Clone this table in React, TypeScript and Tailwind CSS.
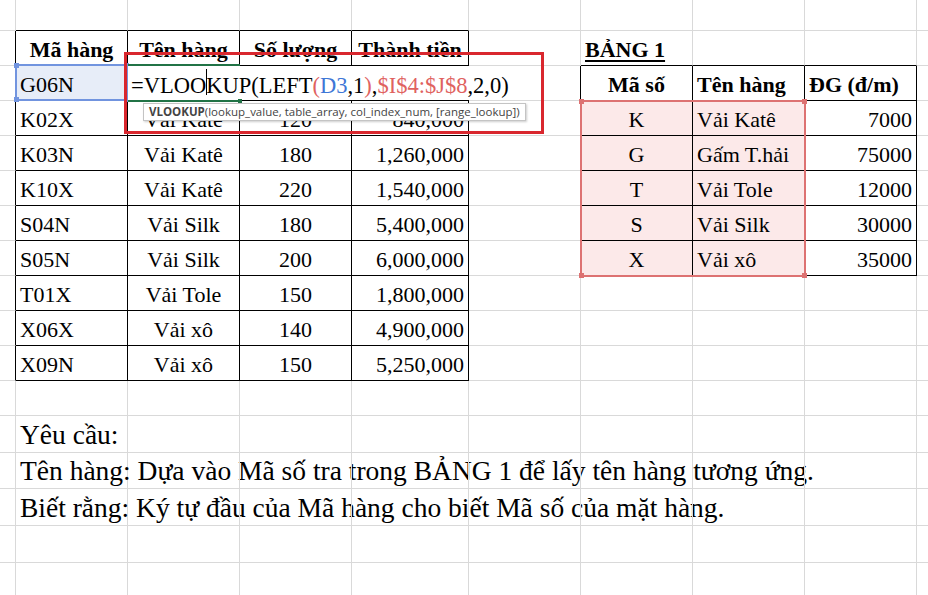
import React from "react";

type Cell = { t: string; a?: "l" | "c" | "r"; b?: boolean; u?: boolean; big?: boolean };

const ROW_COUNT = 17;
const COL_COUNT = 10;

const align = { l: "justify-start", c: "justify-center", r: "justify-end" };

const goods = [
  ["K02X", "Vải Katê", "120", "840,000"],
  ["K03N", "Vải Katê", "180", "1,260,000"],
  ["K10X", "Vải Katê", "220", "1,540,000"],
  ["S04N", "Vải Silk", "180", "5,400,000"],
  ["S05N", "Vải Silk", "200", "6,000,000"],
  ["T01X", "Vải Tole", "150", "1,800,000"],
  ["X06X", "Vải xô", "140", "4,900,000"],
  ["X09N", "Vải xô", "150", "5,250,000"],
];

const prices = [
  ["K", "Vải Katê", "7000"],
  ["G", "Gấm T.hải", "75000"],
  ["T", "Vải Tole", "12000"],
  ["S", "Vải Silk", "30000"],
  ["X", "Vải xô", "35000"],
];

const cells: Record<string, Cell> = {
  "1-1": { t: "Mã hàng", a: "c", b: true },
  "1-2": { t: "Tên hàng", a: "c", b: true },
  "1-3": { t: "Số lượng", a: "c", b: true },
  "1-4": { t: "Thành tiền", a: "c", b: true },
  "2-1": { t: "G06N", a: "l" },
  "1-6": { t: "BẢNG 1", a: "l", b: true, u: true },
  "2-6": { t: "Mã số", a: "c", b: true },
  "2-7": { t: "Tên hàng", a: "l", b: true },
  "2-8": { t: "ĐG (đ/m)", a: "l", b: true },
  "12-1": { t: "Yêu cầu:", a: "l", big: true },
  "13-1": { t: "Tên hàng: Dựa vào Mã số tra trong BẢNG 1 để lấy tên hàng tương ứng.", a: "l", big: true },
  "14-1": { t: "Biết rằng: Ký tự đầu của Mã hàng cho biết Mã số của mặt hàng.", a: "l", big: true },
};

goods.forEach((g, i) => {
  const r = i + 3;
  cells[`${r}-1`] = { t: g[0], a: "l" };
  cells[`${r}-2`] = { t: g[1], a: "c" };
  cells[`${r}-3`] = { t: g[2], a: "c" };
  cells[`${r}-4`] = { t: g[3], a: "r" };
});

prices.forEach((p, i) => {
  const r = i + 3;
  cells[`${r}-6`] = { t: p[0], a: "c" };
  cells[`${r}-7`] = { t: p[1], a: "l" };
  cells[`${r}-8`] = { t: p[2], a: "r" };
});

const inTable = (r: number, c: number) =>
  (r >= 1 && r <= 10 && c >= 1 && c <= 4) || (r >= 2 && r <= 7 && c >= 6 && c <= 8);

const fill = (r: number, c: number) => {
  if (r === 2 && c === 1) return "bg-[#e7edf8]";
  if (r >= 3 && r <= 7 && (c === 6 || c === 7)) return "bg-[#fce9e9]";
  return "";
};

// range outline with the four corner squares excel draws
const RefBox = ({ className, color }: { className: string; color: string }) => (
  <div className={`absolute border-2 ${className}`}>
    <div className={`absolute -left-[3px] -top-[3px] w-[5px] h-[5px] ${color}`} />
    <div className={`absolute -right-[3px] -top-[3px] w-[5px] h-[5px] ${color}`} />
    <div className={`absolute -left-[3px] -bottom-[3px] w-[5px] h-[5px] ${color}`} />
    <div className={`absolute -right-[3px] -bottom-[3px] w-[5px] h-[5px] ${color}`} />
  </div>
);

const App = () => {
  const grid: React.ReactNode[] = [];
  for (let r = 0; r < ROW_COUNT; r++) {
    for (let c = 0; c < COL_COUNT; c++) {
      const cell = cells[`${r}-${c}`];
      const right = inTable(r, c) || inTable(r, c + 1) ? "border-r-black" : "border-r-[#d9d9d9]";
      const bottom = inTable(r, c) || inTable(r + 1, c) ? "border-b-black" : "border-b-[#d9d9d9]";
      grid.push(
        <div
          key={`${r}-${c}`}
          className={`flex items-end border-r border-b px-[4px] pb-[4px] whitespace-nowrap ${right} ${bottom} ${fill(r, c)} ${cell ? align[cell.a ?? "l"] : ""}`}
        >
          {cell && (
            <span
              className={`${cell.big ? "text-[27.5px] leading-[27px]" : "text-[22px] leading-[22px]"} ${cell.b ? "font-bold" : ""} ${cell.u ? "underline decoration-2 underline-offset-[3px]" : ""}`}
            >
              {cell.t}
            </span>
          )}
        </div>
      );
    }
  }

  return (
    <div className="relative w-[928px] h-[595px] overflow-hidden bg-white text-black font-['Liberation_Serif',serif]">
      <div className="grid grid-cols-[16px_112px_112px_112px_117px_112px_112px_112px_112px_112px] grid-rows-[31px_repeat(11,35px)_37px_36px_37px_37px_40px]">
        {grid}
      </div>

      <RefBox className="left-[15px] top-[64px] w-[113px] h-[37px] border-[#7194df]" color="bg-[#7194df]" />
      <RefBox className="left-[580px] top-[100px] w-[226px] h-[177px] border-[#dd7272]" color="bg-[#dd7272]" />

      {/* cell being edited */}
      <div className="absolute left-[128px] top-[66px] w-[415px] h-[34px] bg-white flex items-end pb-[3px] pl-[3px] whitespace-nowrap text-[22.5px] leading-[22px]">
        <span>=VLOO</span>
        <span className="w-px h-[26px] bg-black -mr-px self-center" />
        <span>KUP(LEFT</span>
        <span className="text-[#e0625f]">(</span>
        <span className="text-[#3f77d6]">D3</span>
        <span>,1</span>
        <span className="text-[#e0625f]">)</span>
        <span>,</span>
        <span className="text-[#e0625f]">$I$4:$J$8</span>
        <span>,2,0)</span>
      </div>
      <div className="absolute left-[128px] top-[64px] w-[112px] h-[2px] bg-[#217346]" />
      <div className="absolute left-[128px] top-[100px] w-[112px] h-[2px] bg-[#217346]" />
      <div className="absolute left-[238px] top-[99px] w-[4px] h-[4px] bg-[#217346]" />

      {/* function tooltip */}
      <div className="absolute left-[143px] top-[103px] h-[18px] px-[5px] flex items-center bg-white border border-[#c4c4c4] shadow-[1px_1px_2px_rgba(0,0,0,0.2)] font-['Open_Sans',sans-serif] text-[11.5px] text-[#444] whitespace-nowrap">
        <span className="font-bold">VLOOKUP</span>
        <span>(lookup_value, table_array, col_index_num, [range_lookup])</span>
      </div>

      {/* annotation */}
      <div className="absolute left-[124px] top-[52px] w-[420px] h-[82px] border-[3px] border-[#d9272e]" />
    </div>
  );
};

export default App;
